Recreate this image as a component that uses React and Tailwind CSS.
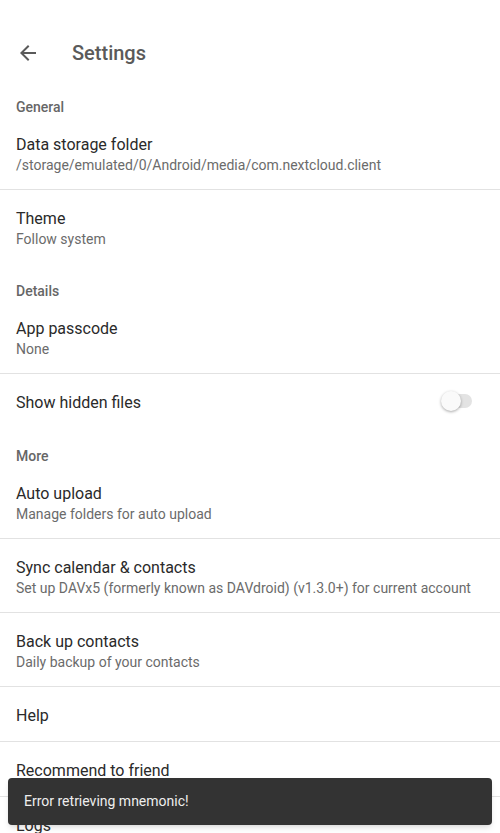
import React from 'react';

const sections = [
  {
    title: 'General',
    items: [
      { label: 'Data storage folder', summary: '/storage/emulated/0/Android/media/com.nextcloud.client', divider: true },
      { label: 'Theme', summary: 'Follow system' },
    ],
  },
  {
    title: 'Details',
    items: [
      { label: 'App passcode', summary: 'None', divider: true },
      { label: 'Show hidden files', toggle: true },
    ],
  },
  {
    title: 'More',
    items: [
      { label: 'Auto upload', summary: 'Manage folders for auto upload', divider: true },
      { label: 'Sync calendar & contacts', summary: 'Set up DAVx5 (formerly known as DAVdroid) (v1.3.0+) for current account', divider: true },
      { label: 'Back up contacts', summary: 'Daily backup of your contacts', divider: true },
      { label: 'Help', divider: true },
      { label: 'Recommend to friend', divider: true },
      { label: 'Logs', divider: true },
    ],
  },
];

const Switch = () => (
  <div className="relative w-[31px] h-[20px] flex items-center mr-[12px]">
    <div className="w-[30px] h-[14px] ml-[1px] rounded-full bg-[#e3e3e3]" />
    <div className="absolute left-0 top-0 w-[20px] h-[20px] rounded-full bg-[#fafafa] shadow-[0_1px_3px_rgba(0,0,0,0.35)]" />
  </div>
);

const Row = ({ item }) => (
  <div className={`flex items-center pl-4 pr-4 ${item.divider ? 'border-b border-[#e2e2e2]' : ''}`}>
    <div className="flex-1 min-w-0">
      <div className={`pt-[17px] ${item.summary ? 'pb-4' : 'pb-[13px]'}`}>
        <div className="text-[16px] leading-6 text-[#2a2a2a]">{item.label}</div>
        {item.summary && (
          <div className="text-[14px] leading-4 text-[#6b6b6b] whitespace-nowrap">{item.summary}</div>
        )}
      </div>
    </div>
    {item.toggle && <Switch />}
  </div>
);

export default function App() {
  return (
    <div
      className="relative w-[500px] h-[833px] overflow-hidden bg-white"
      style={{ fontFamily: 'Roboto, "Noto Sans", sans-serif' }}
    >
      <div className="pt-[26px]">
        <div className="h-[53px] flex items-center">
          <div className="w-[72px] flex justify-center pr-[16px]">
            <svg width="24" height="24" viewBox="0 0 24 24">
              <path d="M20 11H7.83l5.59-5.59L12 4l-8 8 8 8 1.41-1.41L7.83 13H20v-2z" fill="#5a5a5a" />
            </svg>
          </div>
          <div className="text-[20px] leading-7 text-[#5a5a5a] font-medium">Settings</div>
        </div>
      </div>

      {sections.map((section) => (
        <div key={section.title}>
          <div className="pl-4 pt-[18px] h-[37px] text-[14px] leading-5 font-medium text-[#666666]">
            {section.title}
          </div>
          {section.items.map((item) => (
            <Row key={item.label} item={item} />
          ))}
        </div>
      ))}

      <div className="absolute left-[8px] right-[8px] top-[778px] h-[47px] rounded-[4px] bg-[#333333] flex items-center pl-4 shadow-md">
        <span className="text-[14px] text-[#eeeeee]">Error retrieving mnemonic!</span>
      </div>
    </div>
  );
}
